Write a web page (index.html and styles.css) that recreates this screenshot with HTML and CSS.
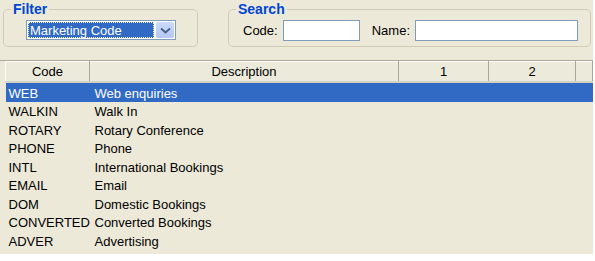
FILE: index.html
```html
<!DOCTYPE html>
<html lang="en">
<head>
  <meta charset="UTF-8">
  <title>Marketing Codes</title>
  <link rel="stylesheet" href="styles.css">
</head>
<body>

  <div class="ventana">

    <div class="barra">
      <fieldset class="grupo grupo-filtro">
        <legend>Filter</legend>
        <div class="combo">
          <span class="combo-texto">Marketing Code</span>
          <span class="combo-boton">
            <svg width="11" height="7" viewBox="0 0 11 7"><path d="M1 1.5 L5.5 5.5 L10 1.5" fill="none" stroke="#4d6185" stroke-width="2"/></svg>
          </span>
        </div>
      </fieldset>

      <fieldset class="grupo grupo-buscar">
        <legend>Search</legend>
        <label class="etiqueta">Code:</label>
        <input type="text" class="caja caja-codigo">
        <label class="etiqueta etiqueta-nombre">Name:</label>
        <input type="text" class="caja caja-nombre">
      </fieldset>
    </div>

    <div class="rejilla">
      <table id="codigos">
        <thead>
          <tr>
            <th class="col-codigo">Code</th>
            <th class="col-desc">Description</th>
            <th class="col-num">1</th>
            <th class="col-num2">2</th>
            <th class="col-resto"></th>
          </tr>
        </thead>
        <tbody></tbody>
      </table>
    </div>

  </div>

  <script>
    const codigos = [
      ["WEB", "Web enquiries"],
      ["WALKIN", "Walk In"],
      ["ROTARY", "Rotary Conference"],
      ["PHONE", "Phone"],
      ["INTL", "International Bookings"],
      ["EMAIL", "Email"],
      ["DOM", "Domestic Bookings"],
      ["CONVERTED", "Converted Bookings"],
      ["ADVER", "Advertising"]
    ];

    const tbody = document.querySelector("#codigos tbody");
    codigos.forEach((item, index) => {
      const fila = document.createElement("tr");
      if (index === 0) fila.className = "seleccionada";
      fila.innerHTML = `
        <td class="celda-codigo">${item[0]}</td>
        <td class="celda-desc">${item[1]}</td>
        <td></td>
        <td></td>
        <td></td>
      `;
      tbody.appendChild(fila);
    });
  </script>
</body>
</html>
```

FILE: styles.css
```css
body {
  margin: 0;
  background-color: white;
  font-family: "Liberation Sans", Arial, sans-serif;
  font-size: 13px;
  color: black;
}

.ventana {
  width: 593px;
  height: 254px;
  background-color: #ece9d8;
  overflow: hidden;
}

.barra {
  display: flex;
  padding: 3px 0 0 3px;
  height: 57px;
  box-sizing: border-box;
}

.grupo {
  margin: 0;
  border: 1px solid #d0ccb9;
  border-radius: 5px;
  height: 44px;
  box-sizing: border-box;
  display: flex;
  align-items: center;
  padding: 0 0 2px 0;
}

.grupo legend {
  color: #0046d5;
  font-weight: bold;
  font-size: 14px;
  padding: 0 2px;
  margin-left: 7px;
  line-height: 13px;
}

.grupo-filtro {
  width: 195px;
}

.grupo-buscar {
  width: 363px;
  margin-left: 30px;
}

.combo {
  margin-left: 22px;
  width: 150px;
  height: 20px;
  box-sizing: border-box;
  border: 1px solid #7f9db9;
  background-color: white;
  display: flex;
  align-items: center;
  padding: 1px;
}

.combo-texto {
  flex: 1;
  height: 16px;
  line-height: 15px;
  background-color: #316ac5;
  color: white;
  border: 1px dotted #f0f0a0;
  box-sizing: border-box;
  padding-left: 1px;
  margin-right: 2px;
}

.combo-boton {
  width: 18px;
  height: 16px;
  border-radius: 2px;
  background: linear-gradient(#cbdafc, #b3c7f5);
  display: flex;
  align-items: center;
  justify-content: center;
}

.etiqueta {
  margin-left: 14px;
  margin-right: 5px;
}

.etiqueta-nombre {
  margin-left: 12px;
}

.caja {
  height: 21px;
  box-sizing: border-box;
  border: 1px solid #7f9db9;
  margin: 0;
  padding: 0;
}

.caja-codigo {
  width: 77px;
}

.caja-nombre {
  width: 163px;
}

.rejilla {
  border-top: 1px solid #aca899;
  margin-top: 3px;
  padding-left: 5px;
}

table {
  border-collapse: collapse;
  table-layout: fixed;
  width: 588px;
}

th {
  font-weight: normal;
  height: 19px;
  padding: 0;
  text-align: center;
  background-color: #ebeadb;
  border-left: 1px solid white;
  border-right: 1px solid #aca899;
  border-bottom: 2px solid #d6d2c2;
  border-top: 1px solid white;
}

.col-codigo { width: 83px; }
.col-desc { width: 308px; }
.col-num { width: 89px; }
.col-num2 { width: 86px; }

td {
  padding: 1px 0 0 0;
  height: 17.5px;
  white-space: nowrap;
  overflow: hidden;
}

.celda-codigo {
  padding-left: 3px;
}

.celda-desc {
  padding-left: 5px;
}

tbody tr:first-child td {
  height: 18px;
}

tr.seleccionada td {
  background-color: #316ac5;
  color: white;
}
```
